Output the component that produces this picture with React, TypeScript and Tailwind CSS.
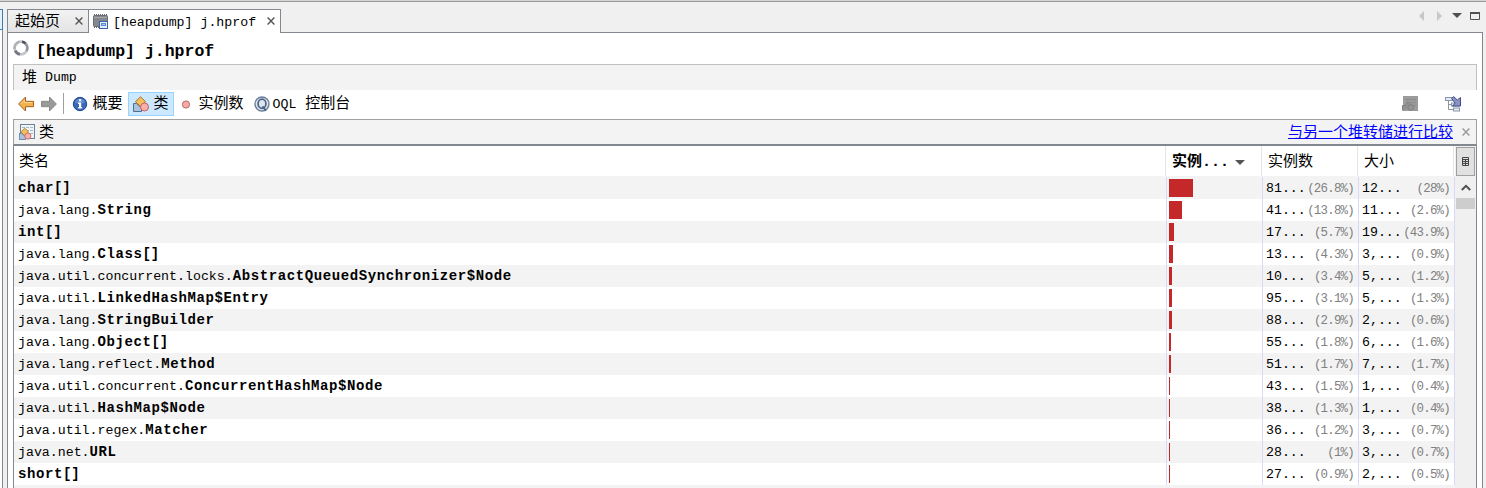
import React from 'react';

type Row = {
  pkg: string;
  name: string;
  bar: number;
  count: string;
  countPct: string;
  size: string;
  sizePct: string;
};

const rows: Row[] = [
  { pkg: '', name: 'char[]', bar: 24, count: '81...', countPct: '(26.8%)', size: '12...', sizePct: '(28%)' },
  { pkg: 'java.lang.', name: 'String', bar: 13, count: '41...', countPct: '(13.8%)', size: '11...', sizePct: '(2.6%)' },
  { pkg: '', name: 'int[]', bar: 5, count: '17...', countPct: '(5.7%)', size: '19...', sizePct: '(43.9%)' },
  { pkg: 'java.lang.', name: 'Class[]', bar: 4, count: '13...', countPct: '(4.3%)', size: '3,...', sizePct: '(0.9%)' },
  { pkg: 'java.util.concurrent.locks.', name: 'AbstractQueuedSynchronizer$Node', bar: 3, count: '10...', countPct: '(3.4%)', size: '5,...', sizePct: '(1.2%)' },
  { pkg: 'java.util.', name: 'LinkedHashMap$Entry', bar: 3, count: '95...', countPct: '(3.1%)', size: '5,...', sizePct: '(1.3%)' },
  { pkg: 'java.lang.', name: 'StringBuilder', bar: 3, count: '88...', countPct: '(2.9%)', size: '2,...', sizePct: '(0.6%)' },
  { pkg: 'java.lang.', name: 'Object[]', bar: 2, count: '55...', countPct: '(1.8%)', size: '6,...', sizePct: '(1.6%)' },
  { pkg: 'java.lang.reflect.', name: 'Method', bar: 2, count: '51...', countPct: '(1.7%)', size: '7,...', sizePct: '(1.7%)' },
  { pkg: 'java.util.concurrent.', name: 'ConcurrentHashMap$Node', bar: 1, count: '43...', countPct: '(1.5%)', size: '1,...', sizePct: '(0.4%)' },
  { pkg: 'java.util.', name: 'HashMap$Node', bar: 1, count: '38...', countPct: '(1.3%)', size: '1,...', sizePct: '(0.4%)' },
  { pkg: 'java.util.regex.', name: 'Matcher', bar: 1, count: '36...', countPct: '(1.2%)', size: '3,...', sizePct: '(0.7%)' },
  { pkg: 'java.net.', name: 'URL', bar: 1, count: '28...', countPct: '(1%)', size: '3,...', sizePct: '(0.7%)' },
  { pkg: '', name: 'short[]', bar: 1, count: '27...', countPct: '(0.9%)', size: '2,...', sizePct: '(0.5%)' },
];

function CloseIcon({ className }: { className: string }) {
  return (
    <svg width="8" height="8" viewBox="0 0 8 8" className={className}>
      <path d="M.6 .6 7.4 7.4M7.4 .6 .6 7.4" stroke="currentColor" strokeWidth="1.4" />
    </svg>
  );
}

function HeapIcon() {
  return (
    <svg width="16" height="16" viewBox="0 0 16 16" className="shrink-0">
      <path d="M1.5 0v2M3.5 0v2M5.5 0v2M7.5 0v2M9.5 0v2M11.5 0v2M13.5 0v2M1.5 12v2M3.5 12v2M5.5 12v2" stroke="#66696d" />
      <rect x=".5" y="1.5" width="14" height="11" rx="1" fill="#85898d" stroke="#6b6f72" />
      <path d="M1 3.5h13" stroke="#a5a9ac" />
      <rect x="6.5" y="7.5" width="8" height="7" fill="#e6effb" stroke="#3a62a8" />
      <rect x="8.5" y="9.5" width="4" height="2" fill="#a9c6ee" stroke="#5c8bd0" />
    </svg>
  );
}

function SpinnerIcon() {
  return (
    <svg width="16" height="16" viewBox="0 0 16 16" className="shrink-0" fill="none" strokeWidth="2.6">
      <circle cx="8" cy="8" r="6.4" stroke="#c4c5ca" />
      <path d="M6.4 1.8A6.4 6.4 0 0 0 1.7 9" stroke="#b0b2b8" />
      <path d="M9 1.7A6.4 6.4 0 0 1 12.6 3.6" stroke="#50525c" />
      <path d="M12.6 3.6A6.4 6.4 0 0 1 13.4 11" stroke="#9597a0" />
      <path d="M2.2 10.6A6.4 6.4 0 0 0 7 14.3" stroke="#747680" />
    </svg>
  );
}

function ArrowLeft() {
  return (
    <svg width="16" height="16" viewBox="0 0 16 16" className="shrink-0">
      <path d="M.6 8 7.5 1V5.3H15.5V10.7H7.5V15Z" fill="#f3b04e" stroke="#a4621c" strokeLinejoin="round" />
      <path d="M2.6 8 6.5 4V6.6H14.2" fill="none" stroke="#fbd592" />
    </svg>
  );
}

function ArrowRight() {
  return (
    <svg width="16" height="16" viewBox="0 0 16 16" className="shrink-0">
      <path d="M15.4 8 8.5 1V5.3H.5V10.7H8.5V15Z" fill="#999" stroke="#8a8a8a" strokeLinejoin="round" />
    </svg>
  );
}

function InfoIcon() {
  return (
    <svg width="16" height="16" viewBox="0 0 16 16" className="shrink-0">
      <circle cx="8" cy="8" r="6.7" fill="#3a68b8" stroke="#21488f" />
      <path d="M3 6.5A5.2 5.2 0 0 1 13 6.5Q8 8.5 3 6.5Z" fill="#5f8ace" />
      <path d="M7 3.2h2.2v2H7zM6 6.6h3.2v4.6h1v1.4H6v-1.4h1V8H6z" fill="#fff" />
    </svg>
  );
}

function ClassShapes() {
  return (
    <>
      <path d="M.5 15.5V7.5L3.5 7.5 8.5 12V15.5Z" fill="#a9c3dd" stroke="#4d6f94" />
      <path d="M7.5 .8 12.6 5.7 7.5 10.6 2.4 5.7Z" fill="#f2c060" stroke="#a87422" />
      <circle cx="11.5" cy="11" r="4" fill="#f9b0ac" stroke="#c4605c" />
    </>
  );
}

function ClassIcon() {
  return (
    <svg width="16" height="16" viewBox="0 0 16 16" className="shrink-0">
      <ClassShapes />
    </svg>
  );
}

function ClassTableIcon() {
  return (
    <svg width="16" height="16" viewBox="0 0 16 16" className="shrink-0">
      <rect x="1.5" y=".5" width="14" height="14" fill="#eef3f8" stroke="#6d8296" />
      <path d="M3 3.5h3M7 3.5h3M11 3.5h3M3 6.5h3M7 6.5h3M11 6.5h3M11 9.5h3" stroke="#a9b8c6" />
      <g transform="translate(0 3.6) scale(.77)">
        <ClassShapes />
      </g>
    </svg>
  );
}

function InstanceIcon() {
  return (
    <svg width="16" height="16" viewBox="0 0 16 16" className="shrink-0">
      <circle cx="8" cy="8.5" r="3.6" fill="#f6aaa6" stroke="#b86864" />
    </svg>
  );
}

function OqlIcon() {
  return (
    <svg width="16" height="16" viewBox="0 0 16 16" className="shrink-0" fill="none">
      <circle cx="8" cy="8" r="7" fill="#dfe6ee" stroke="#6a7f9a" strokeWidth="1.4" />
      <ellipse cx="8" cy="7.8" rx="3.9" ry="4.6" stroke="#4c6484" strokeWidth="1.7" />
      <path d="M8.4 10.4 12 14.6" stroke="#4c6484" strokeWidth="1.8" />
    </svg>
  );
}

function DisabledTableIcon() {
  return (
    <svg width="16" height="16" viewBox="0 0 16 16">
      <rect x="1" y="0" width="15" height="15" fill="#9b9b9b" />
      <path d="M3 3.5h11M9 6.5h5M11 9.5h3" stroke="#8c8c8c" />
      <path d="M.5 14.5V9.5L3.5 9.5 6 5.5 9.5 9 6.5 12" fill="#929292" stroke="#808080" />
      <circle cx="8.7" cy="11.5" r="2.8" fill="#959595" stroke="#808080" />
    </svg>
  );
}

function TreeIcon() {
  return (
    <svg width="16" height="16" viewBox="0 0 16 16">
      <path d="M3.5 5v8.5H8M3.5 8.5H8" stroke="#8a949e" fill="none" />
      <rect x=".5" y="1.5" width="7" height="3" fill="#e3ebf2" stroke="#8898a8" />
      <rect x="6.5" y="7" width="8" height="3" fill="#e3ebf2" stroke="#8898a8" />
      <rect x="8.5" y="12" width="6" height="3" fill="#e3ebf2" stroke="#8898a8" />
      <path d="M6.5 2.5 8.7 .6 12.3 4 15.5 1.5V10H7.6L10.2 7Z" fill="#8a93c4" stroke="#414c8c" />
    </svg>
  );
}

function ToolItem({ icon, children }: { icon: React.ReactNode; children: React.ReactNode }) {
  return (
    <div className="flex h-6 items-center text-[15px] leading-5">
      {icon}
      <span className="ml-[4.5px] pt-[3px] whitespace-pre">{children}</span>
    </div>
  );
}

/* Array brackets are drawn in the regular weight after the bold class name. */
function ClassName({ name }: { name: string }) {
  const isArray = name.endsWith('[]');
  return (
    <>
      <span className="text-[14px] font-bold tracking-[0.6px]">{isArray ? name.slice(0, -2) : name}</span>
      {isArray && <span className="text-[14px] font-semibold tracking-[-0.1px]">[]</span>}
    </>
  );
}

export default function App() {
  return (
    <div className="flex h-[488px] w-[1486px] flex-col overflow-hidden bg-[#f0f0f0] font-['Liberation_Mono','Noto_Sans_CJK_SC',monospace] text-black">
      <div className="h-[2px] shrink-0 border-b border-[#999999] bg-[#d4d4d4]" />
      <div className="flex min-h-0 flex-1 pt-[7px]">
        <div className="flex w-[3px] shrink-0 flex-col">
          <div className="h-[21px] border-t border-r border-b border-[#3c7fb1] bg-[#e4f1fb]" />
          <div className="flex-1 border-r border-[#828790] bg-white" />
        </div>
        <div className="ml-1 flex w-[1476px] flex-col">
          <div className="flex h-6 shrink-0">
            <div className="flex w-[82px] shrink-0 items-center border border-[#828790] bg-linear-to-b from-[#f2f2f2] to-[#e4e4e4] pl-[7px]">
              <span className="w-[60px] pt-[4px] text-[15px] leading-5">起始页</span>
              <CloseIcon className="text-[#555]" />
            </div>
            <div className="flex w-[192px] shrink-0 items-center border-t border-r border-[#828790] bg-white pl-[4px]">
              <HeapIcon />
              <span className="ml-[4px] w-[154px] pt-[2px] text-[13.25px] leading-5">[heapdump] j.hprof</span>
              <CloseIcon className="mb-[2px] text-[#555]" />
            </div>
            <div className="flex flex-1 items-center justify-end border-b border-[#828790]">
              <svg width="64" height="12" viewBox="0 0 64 12" className="mr-[2px] mb-[10px]">
                <path d="M7 1v10L2 6z" fill="#c8c8c8" />
                <path d="M20 1v10l5-5z" fill="#c8c8c8" />
                <path d="M35 3h10l-5 5z" fill="#505050" />
                <path d="M53.5 2.5h9v7h-9z" fill="none" stroke="#505050" />
                <path d="M53 3h10" stroke="#505050" strokeWidth="2" />
              </svg>
            </div>
          </div>

          <div className="flex min-h-0 flex-1 flex-col border-r border-l border-[#828790] bg-white pr-[5px] pl-[5px]">
            <div className="flex h-[31px] shrink-0 items-center">
              <div className="mb-[1px]">
                <SpinnerIcon />
              </div>
              <span className="ml-[7px] pt-[6px] text-[16.5px] leading-5 font-bold">[heapdump] j.hprof</span>
            </div>
            <div className="flex h-[26px] shrink-0 items-center border-t border-r border-l border-[#c0c0c0] bg-[#f3f3f3] pl-2 text-[15px]">
              <span className="pt-[3px] leading-5">堆</span>
              <span className="ml-[8px] pt-[1px] text-[13.25px] leading-5">Dump</span>
            </div>
            <div className="flex h-[29px] shrink-0 items-center justify-between pr-[16px] pb-[2px] pl-[5px]">
              <div className="flex items-center">
                <ArrowLeft />
                <div className="ml-[7px]">
                  <ArrowRight />
                </div>
                <div className="mr-2 ml-[6px] h-[21px] w-px bg-[#a0a0a0]" />
                <ToolItem icon={<InfoIcon />}>概要</ToolItem>
                <div className="ml-[5.5px] border border-[#99d1ff] bg-[#cce8ff] px-1">
                  <div className="-my-px">
                    <ToolItem icon={<ClassIcon />}>类</ToolItem>
                  </div>
                </div>
                <div className="ml-[4.5px]">
                  <ToolItem icon={<InstanceIcon />}>实例数</ToolItem>
                </div>
                <div className="ml-[10px] flex h-6 items-center text-[15px] leading-5">
                  <OqlIcon />
                  <span className="ml-[3px] pt-[3px] whitespace-pre">
                    <span className="text-[13.25px]">OQL </span>
                    <span className="ml-px">控制台</span>
                  </span>
                </div>
              </div>
              <div className="flex gap-[27px]">
                <DisabledTableIcon />
                <TreeIcon />
              </div>
            </div>

            <div className="flex h-[27px] shrink-0 items-center justify-between border-x border-t border-b-2 border-[#a0a0a0] border-b-[#828790] bg-[#f3f3f3] pr-[6px] pl-[5px] text-[15px] leading-5">
              <div className="flex items-center gap-1">
                <ClassTableIcon />
                <span className="pt-[4px]">类</span>
              </div>
              <div className="flex items-center gap-[9px]">
                <span className="pt-[4px] text-[#0000ff] underline underline-offset-1">与另一个堆转储进行比较</span>
                <CloseIcon className="text-[#999]" />
              </div>
            </div>

            <div className="flex min-h-0 flex-1 border-x border-[#828790]">
              <div className="flex w-[1441px] flex-col overflow-hidden">
                <div className="flex h-[30px] shrink-0 text-[15px] leading-[30px]">
                  <div className="w-[1152px] border-r border-[#e5e5e5] pt-[2px] pl-[5px]">类名</div>
                  <div className="flex w-[96px] items-center border-r border-[#e5e5e5] pl-[6px] font-bold">
                    <span className="pt-[4px]">实例...</span>
                    <svg width="10" height="5" viewBox="0 0 10 5" className="mt-[2px] ml-[6px]">
                      <path d="M0 0h10L5 5z" fill="#555" />
                    </svg>
                  </div>
                  <div className="w-[96px] border-r border-[#e5e5e5] pt-[2px] pl-[6px]">实例数</div>
                  <div className="w-[96px] border-r border-[#e5e5e5] pt-[2px] pl-[6px]">大小</div>
                </div>
                <div className="h-px shrink-0 bg-[#f3f3f3]" />
                {rows.map((r) => (
                  <div key={r.name} className="flex h-[22px] shrink-0 text-[13.25px] leading-[22px] nth-[2n+3]:bg-[#f3f3f3]">
                    <div className="w-[1153px] border-r border-[#d5daf6] pl-1 whitespace-nowrap">
                      <span>{r.pkg}</span>
                      <ClassName name={r.name} />
                    </div>
                    <div className="w-[96px] border-r border-[#d5daf6] pt-[2px] pl-[2px]">
                      <div className="h-[18px] bg-[#c42828]" style={{ width: r.bar }} />
                    </div>
                    <div className="flex w-[96px] justify-between border-r border-[#d5daf6] pr-1 pl-[3px]">
                      <span className="pt-px">{r.count}</span>
                      <span className="pt-px text-[12.4px] tracking-[-0.75px] text-[#808080]">{r.countPct}</span>
                    </div>
                    <div className="flex w-[96px] justify-between border-r border-[#d5daf6] pr-1 pl-[3px]">
                      <span className="pt-px">{r.size}</span>
                      <span className="pt-px text-[12.4px] tracking-[-0.75px] text-[#808080]">{r.sizePct}</span>
                    </div>
                  </div>
                ))}
                <div className="h-[22px] shrink-0 bg-[#f3f3f3]" />
              </div>
              <div className="flex flex-1 flex-col items-center bg-[#f0f0f0]">
                <div className="mt-px flex h-[29px] w-[19px] shrink-0 items-center justify-center border border-[#a0a0a0] bg-[#e1e1e1]">
                  <svg width="7" height="9" viewBox="0 0 7 9">
                    <path d="M.5 .5h6v8h-6zM0 2.5h7M0 4.5h7M0 6.5h7M3.5 2v7" fill="none" stroke="#444" />
                  </svg>
                </div>
                <div className="flex h-[22px] shrink-0 items-center">
                  <svg width="10" height="7" viewBox="0 0 10 7">
                    <path d="M.8 6 5 1.8 9.2 6" fill="none" stroke="#505050" strokeWidth="2" />
                  </svg>
                </div>
                <div className="h-[11px] w-[19px] shrink-0 bg-[#cdcdcd]" />
              </div>
            </div>
          </div>
        </div>
      </div>
    </div>
  );
}
